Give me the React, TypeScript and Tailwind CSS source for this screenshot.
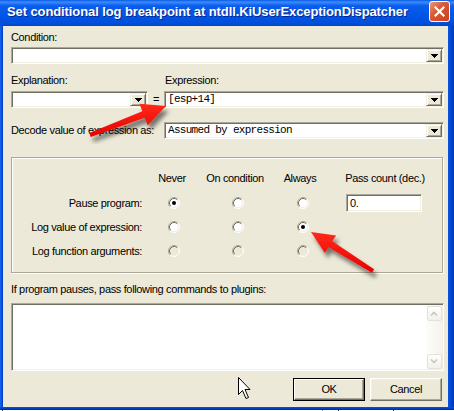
import React from "react";

function DropBtn() {
  return (
    <div className="w-[16px] h-[13px] shrink-0 bg-[#ECE9D8] border border-t-[#F1EFE2] border-l-[#F1EFE2] border-b-[#716F64] border-r-[#716F64] shadow-[inset_1px_1px_0_#fff,inset_-1px_-1px_0_#ACA899] flex items-center justify-center">
      <svg width="7" height="4" viewBox="0 0 7 4" shapeRendering="crispEdges">
        <rect x="0" y="0" width="7" height="1" fill="#000" />
        <rect x="1" y="1" width="5" height="1" fill="#000" />
        <rect x="2" y="2" width="3" height="1" fill="#000" />
        <rect x="3" y="3" width="1" height="1" fill="#000" />
      </svg>
    </div>
  );
}

const sunken =
  "bg-white border border-t-[#ACA899] border-l-[#ACA899] border-b-white border-r-white shadow-[inset_1px_1px_0_#716F64,inset_-1px_-1px_0_#F1EFE2] p-px";

function Combo({ className, text }: { className: string; text?: string }) {
  return (
    <div className={`${sunken} h-[17px] flex items-center ${className}`}>
      <div className="flex-1 h-[13px] pl-[2px] font-['Liberation_Mono',monospace] text-[11px] leading-[13px] tracking-[-0.7px] whitespace-nowrap overflow-hidden">
        {text}
      </div>
      <DropBtn />
    </div>
  );
}

function Radio({ checked, disabled }: { checked?: boolean; disabled?: boolean }) {
  return (
    <svg width="12" height="12" viewBox="0 0 12 12">
      <circle cx="6" cy="6" r="5" fill={disabled ? "#ECE9D8" : "#fff"} />
      <path d="M2.11 9.89 A5.5 5.5 0 0 1 9.89 2.11" stroke="#ACA899" fill="none" />
      <path d="M9.89 2.11 A5.5 5.5 0 0 1 2.11 9.89" stroke="#fff" fill="none" />
      <path d="M2.82 9.18 A4.5 4.5 0 0 1 9.18 2.82" stroke="#716F64" fill="none" />
      <path d="M9.18 2.82 A4.5 4.5 0 0 1 2.82 9.18" stroke="#F1EFE2" fill="none" />
      {checked && <circle cx="6" cy="6" r="2" fill="#000" />}
    </svg>
  );
}

function arrowPts(x1: number, y1: number, x2: number, y2: number, w0: number, w1: number, hl: number, hw: number) {
  const dx = x2 - x1, dy = y2 - y1, L = Math.hypot(dx, dy);
  const ux = dx / L, uy = dy / L, px = -uy, py = ux;
  const bx = x2 - ux * hl, by = y2 - uy * hl;
  const pts = [
    [x1 + (px * w0) / 2, y1 + (py * w0) / 2],
    [bx + (px * w1) / 2, by + (py * w1) / 2],
    [bx + (px * hw) / 2, by + (py * hw) / 2],
    [x2, y2],
    [bx - (px * hw) / 2, by - (py * hw) / 2],
    [bx - (px * w1) / 2, by - (py * w1) / 2],
    [x1 - (px * w0) / 2, y1 - (py * w0) / 2],
  ];
  return pts.map((p) => p.map((v) => v.toFixed(1)).join(",")).join(" ");
}

function ScrollBtn({ up }: { up?: boolean }) {
  return (
    <div className="w-[16px] h-[16px] flex items-center justify-center">
      <div className="w-[15px] h-[15px] rounded-[2px] border border-[#E4E2D8] bg-[linear-gradient(to_bottom,#FFFFFF,#F1F0EA)] flex items-center justify-center">
        <svg width="8" height="5" viewBox="0 0 8 5">
          <path d={up ? "M1 4.5 L4 1.5 L7 4.5" : "M1 0.5 L4 3.5 L7 0.5"} stroke="#C9C7BA" strokeWidth="1.6" fill="none" />
        </svg>
      </div>
    </div>
  );
}

export default function App() {
  return (
    <div className="relative w-[454px] h-[411px] overflow-hidden bg-white font-['Liberation_Sans',Arial,sans-serif] text-[11px] leading-[13px] tracking-[-0.35px] text-black">
      <div className="flex flex-col w-[454px] h-[410px]">
        {/* title bar */}
        <div className="h-[26px] shrink-0 flex items-start bg-[linear-gradient(to_bottom,#0A5AE6_0%,#3C8CFC_8%,#0A5EEE_22%,#0055E5_60%,#0050DC_88%,#0045C8_100%)]">
          <div className="flex-1 pl-[7px] pt-[4px] text-white font-bold text-[13px] leading-[16px] tracking-[-0.1px] [text-shadow:1px_1px_0_#0A2490] whitespace-nowrap overflow-hidden">
            Set conditional log breakpoint at ntdll.KiUserExceptionDispatcher
          </div>
          <div className="mt-[1px] mr-[4px] w-[21px] h-[21px] rounded-[3px] border border-white bg-[linear-gradient(135deg,#EC9A7E_0%,#DB5A36_40%,#C7401C_100%)] flex items-center justify-center">
            <svg width="11" height="11" viewBox="0 0 11 11">
              <path d="M1.5 1.5 L9.5 9.5 M9.5 1.5 L1.5 9.5" stroke="#fff" strokeWidth="2.2" strokeLinecap="square" />
            </svg>
          </div>
        </div>
        <div className="flex flex-1">
          <div className="w-[3px] bg-[linear-gradient(to_right,#1A66F2,#0855E2,#0038BC)]" />
          <div className="flex-1 bg-[#ECE9D8] flex flex-col pl-[8px] pr-[4px] pt-[5px]">
            <div className="h-[13px]">Condition:</div>
            <Combo className="mt-[3px] w-full" />
            <div className="mt-[10px] h-[13px] flex">
              <div className="w-[153px]">Explanation:</div>
              <div className="pl-[1px]">Expression:</div>
            </div>
            <div className="mt-[4px] flex items-center">
              <Combo className="w-[137px]" />
              <div className="w-[16px] text-center leading-[17px]">=</div>
              <Combo className="w-[280px]" text="[esp+14]" />
            </div>
            <div className="mt-[14px] flex items-center h-[17px]">
              <div className="w-[153px] whitespace-nowrap">Decode value of expression as:</div>
              <Combo className="w-[280px]" text="Assumed by expression" />
            </div>
            {/* group */}
            <div className="mt-[18px] h-[116px] w-[432px] border border-[#ACA899] shadow-[inset_1px_1px_0_#fff,1px_1px_0_#fff] pt-[14px]">
              <div className="grid grid-cols-[130px_60px_66px_64px_106px] h-[13px] text-center whitespace-nowrap">
                <div />
                <div>Never</div>
                <div>On condition</div>
                <div>Always</div>
                <div>Pass count (dec.)</div>
              </div>
              <div className="mt-[6px] grid grid-cols-[130px_64px_64px_66px_96px] auto-rows-[24px] items-center">
                <div className="text-right whitespace-nowrap">Pause program:</div>
                <div className="flex justify-center"><Radio checked /></div>
                <div className="flex justify-center"><Radio /></div>
                <div className="flex justify-center"><Radio /></div>
                <div className="flex justify-center">
                  <div className={`${sunken} w-[76px] h-[18px] pl-[3px] leading-[14px]`}>0.</div>
                </div>

                <div className="text-right whitespace-nowrap">Log value of expression:</div>
                <div className="flex justify-center"><Radio /></div>
                <div className="flex justify-center"><Radio /></div>
                <div className="flex justify-center"><Radio checked /></div>
                <div />

                <div className="text-right whitespace-nowrap">Log function arguments:</div>
                <div className="flex justify-center"><Radio disabled /></div>
                <div className="flex justify-center"><Radio disabled /></div>
                <div className="flex justify-center"><Radio disabled /></div>
                <div />
              </div>
            </div>
            <div className="mt-[10px] h-[13px] whitespace-nowrap">If program pauses, pass following commands to plugins:</div>
            <div className={`${sunken} mt-[7px] h-[68px] w-full flex`}>
              <div className="flex-1" />
              <div className="w-[16px] flex flex-col justify-between bg-[linear-gradient(to_right,#FDFDFA,#F4F3EE)]">
                <ScrollBtn up />
                <ScrollBtn />
              </div>
            </div>
            <div className="mt-[7px] flex justify-end gap-[5px] pr-[2px]">
              <div className="w-[72px] h-[23px] border border-black">
                <div className="w-full h-full border border-t-white border-l-white border-b-[#716F64] border-r-[#716F64] shadow-[inset_-1px_-1px_0_#ACA899] flex items-center justify-center">OK</div>
              </div>
              <div className="w-[72px] h-[23px] border border-t-white border-l-white border-b-[#716F64] border-r-[#716F64] shadow-[inset_-1px_-1px_0_#ACA899,inset_1px_1px_0_#F1EFE2] flex items-center justify-center">Cancel</div>
            </div>
          </div>
          <div className="w-[6px] bg-[linear-gradient(to_right,#0A55E0,#0048D4,#0034AE)]" />
        </div>
        <div className="h-[3px] shrink-0 bg-[linear-gradient(to_bottom,#0A50DC,#0040C4,#00249A)]" />
      </div>

      {/* desktop specks below the window */}
      <div className="absolute left-[2px] top-[410px] w-[1px] h-[1px] bg-[#333]" />
      <div className="absolute left-[322px] top-[410px] w-[1px] h-[1px] bg-[#888]" />
      <div className="absolute left-[338px] top-[410px] w-[1px] h-[1px] bg-[#222]" />
      <div className="absolute left-[393px] top-[410px] w-[1px] h-[1px] bg-[#222]" />

      {/* mouse cursor */}
      <svg className="absolute left-[238px] top-[377px]" width="14" height="24" viewBox="0 0 14 24">
        <polygon points="0.5,0.5 0.5,17.5 4.5,13.5 8,21.5 10.5,20.5 7,12.5 12,12.5" fill="#fff" stroke="#000" strokeWidth="1" strokeLinejoin="miter" />
      </svg>

      {/* red annotation arrows */}
      <svg className="absolute left-0 top-0 pointer-events-none" width="454" height="411" viewBox="0 0 454 411">
        <defs>
          <filter id="sh" x="-20%" y="-20%" width="140%" height="140%">
            <feDropShadow dx="3" dy="5" stdDeviation="2.2" floodColor="#000" floodOpacity="0.5" />
          </filter>
          <linearGradient id="rg" x1="0" y1="0" x2="0" y2="1">
            <stop offset="0" stopColor="#FF2A1A" />
            <stop offset="1" stopColor="#E80000" />
          </linearGradient>
        </defs>
        <polygon points={arrowPts(90, 135, 166, 106, 4, 7, 24, 23)} fill="url(#rg)" filter="url(#sh)" />
        <polygon points={arrowPts(373, 271, 311, 232, 4, 7, 23, 21)} fill="url(#rg)" filter="url(#sh)" />
      </svg>
    </div>
  );
}
